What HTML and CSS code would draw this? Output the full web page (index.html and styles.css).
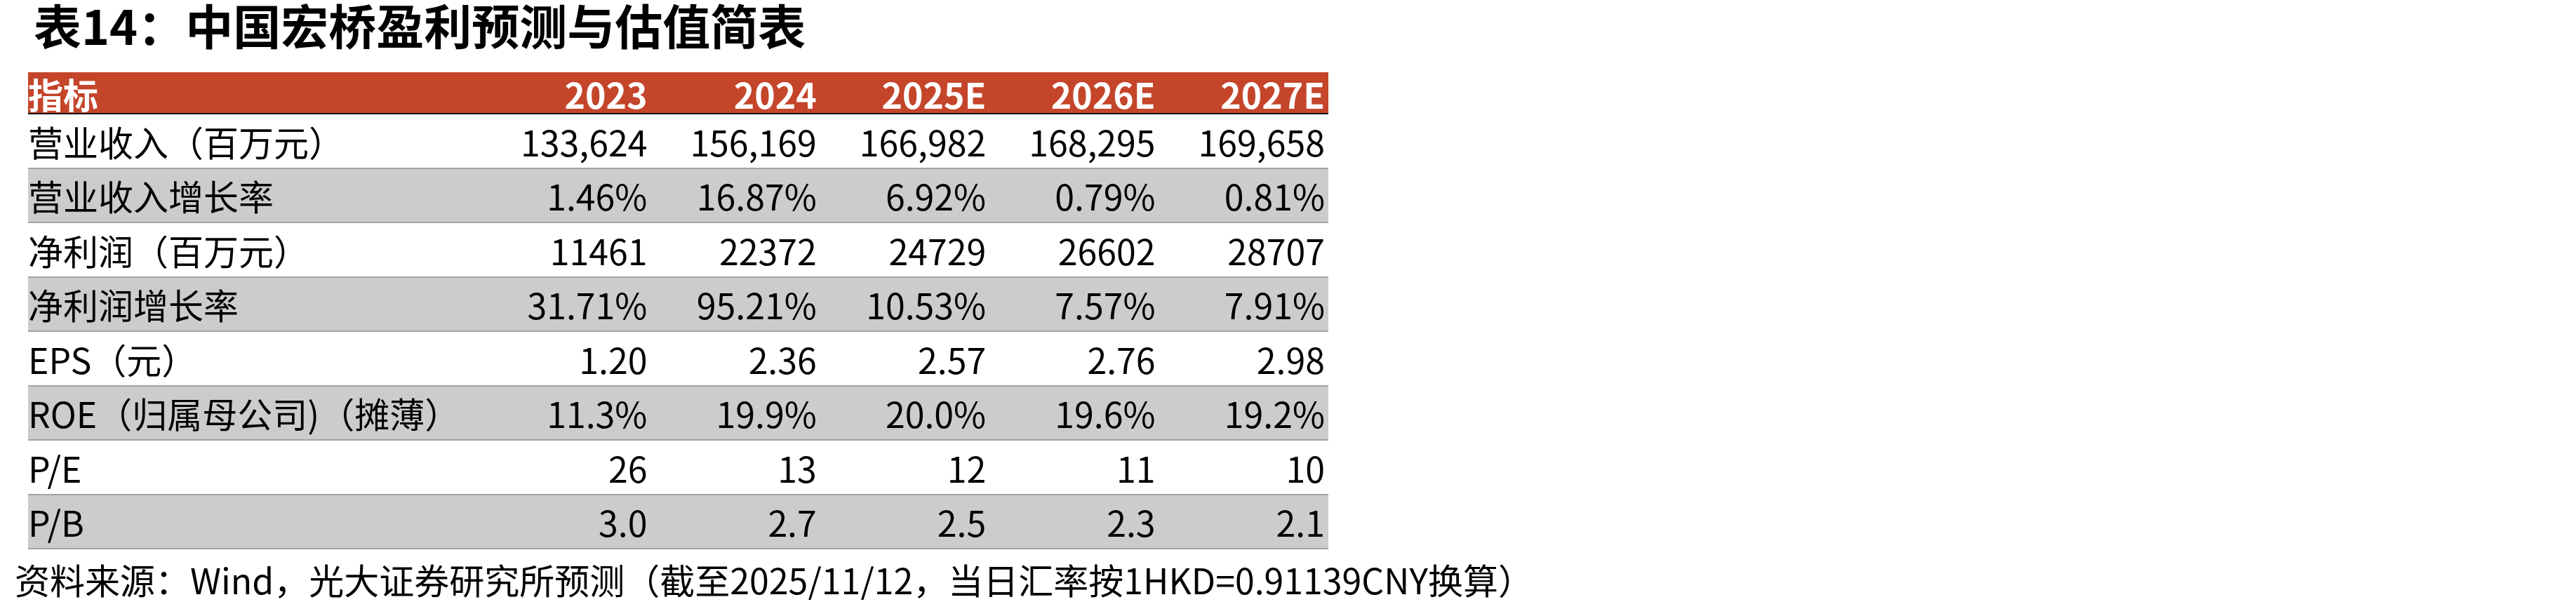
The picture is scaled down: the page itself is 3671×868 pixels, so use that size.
FILE: index.html
```html
<!DOCTYPE html>
<html lang="zh-CN">
<head>
<meta charset="utf-8">
<title>表14：中国宏桥盈利预测与估值简表</title>
<link rel="stylesheet" href="styles.css">
</head>
<body>
<div class="page">
  <h1 class="title">表14：中国宏桥盈利预测与估值简表</h1>
  <div class="table">
    <div class="row head">
      <div class="cell label">指标</div>
      <div class="cell num">2023</div>
      <div class="cell num">2024</div>
      <div class="cell num">2025E</div>
      <div class="cell num">2026E</div>
      <div class="cell num">2027E</div>
    </div>
    <div class="row">
      <div class="cell label">营业收入（百万元）</div>
      <div class="cell num">133,624</div>
      <div class="cell num">156,169</div>
      <div class="cell num">166,982</div>
      <div class="cell num">168,295</div>
      <div class="cell num">169,658</div>
    </div>
    <div class="row alt">
      <div class="cell label">营业收入增长率</div>
      <div class="cell num">1.46%</div>
      <div class="cell num">16.87%</div>
      <div class="cell num">6.92%</div>
      <div class="cell num">0.79%</div>
      <div class="cell num">0.81%</div>
    </div>
    <div class="row">
      <div class="cell label">净利润（百万元）</div>
      <div class="cell num">11461</div>
      <div class="cell num">22372</div>
      <div class="cell num">24729</div>
      <div class="cell num">26602</div>
      <div class="cell num">28707</div>
    </div>
    <div class="row alt">
      <div class="cell label">净利润增长率</div>
      <div class="cell num">31.71%</div>
      <div class="cell num">95.21%</div>
      <div class="cell num">10.53%</div>
      <div class="cell num">7.57%</div>
      <div class="cell num">7.91%</div>
    </div>
    <div class="row">
      <div class="cell label">EPS（元）</div>
      <div class="cell num">1.20</div>
      <div class="cell num">2.36</div>
      <div class="cell num">2.57</div>
      <div class="cell num">2.76</div>
      <div class="cell num">2.98</div>
    </div>
    <div class="row alt">
      <div class="cell label">ROE（归属母公司)（摊薄）</div>
      <div class="cell num">11.3%</div>
      <div class="cell num">19.9%</div>
      <div class="cell num">20.0%</div>
      <div class="cell num">19.6%</div>
      <div class="cell num">19.2%</div>
    </div>
    <div class="row">
      <div class="cell label">P/E</div>
      <div class="cell num">26</div>
      <div class="cell num">13</div>
      <div class="cell num">12</div>
      <div class="cell num">11</div>
      <div class="cell num">10</div>
    </div>
    <div class="row alt">
      <div class="cell label">P/B</div>
      <div class="cell num">3.0</div>
      <div class="cell num">2.7</div>
      <div class="cell num">2.5</div>
      <div class="cell num">2.3</div>
      <div class="cell num">2.1</div>
    </div>
  </div>
  <p class="source">资料来源：Wind，光大证券研究所预测（截至2025/11/12，当日汇率按1HKD=0.91139CNY换算）</p>
</div>
</body>
</html>
```

FILE: styles.css
```css
html, body {
  margin: 0;
  padding: 0;
  background: #ffffff;
}

body {
  font-family: "Noto Sans CJK SC", "Noto Sans", sans-serif;
  color: #000000;
}

.page {
  padding: 1px 0 0 21px;
}

.title {
  margin: 0 0 0 27px;
  font-size: 68px;
  line-height: 68px;
  font-weight: 700;
}

.table {
  margin: 34px 0 0 19px;
  width: 1853px;
}

.row {
  display: grid;
  grid-template-columns: 646px repeat(5, 241.4px);
  height: 77.5px;
  box-sizing: border-box;
  border-bottom: 2px solid #a3a3a3;
  font-size: 50px;
  align-items: center;
}

.row.alt {
  background: #cccccc;
}

.row.head {
  height: 60px;
  background: #c4452a;
  border-bottom: 2px solid #111111;
  color: #ffffff;
  font-weight: 700;
}

.cell {
  line-height: 60px;
  white-space: nowrap;
}

.label {
  padding-left: 0;
}

.num {
  text-align: right;
  padding-right: 5px;
}

.source {
  margin: 12px 0 0 0;
  font-size: 50px;
  line-height: 60px;
}
```
